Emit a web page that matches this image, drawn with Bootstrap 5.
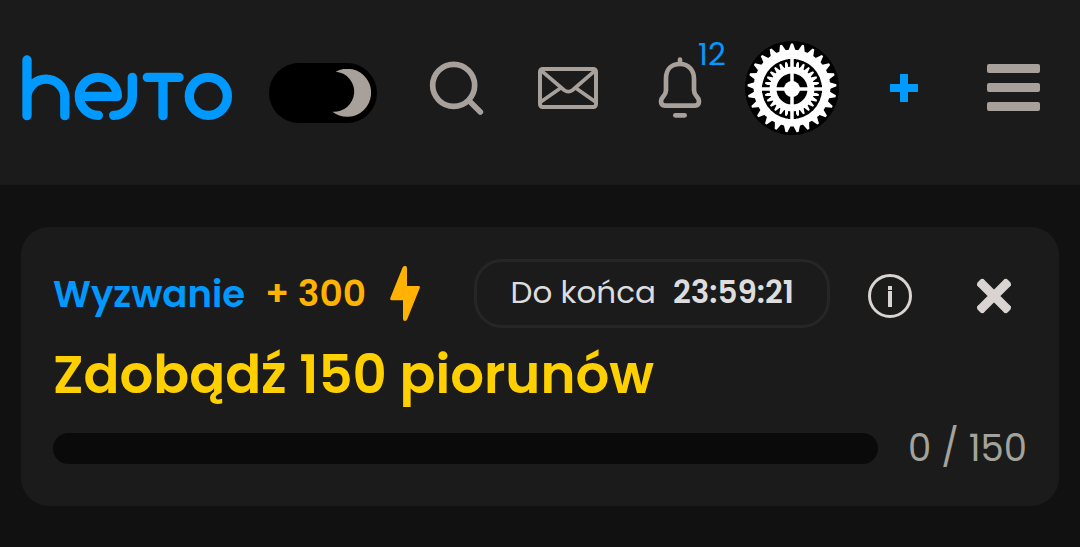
<!DOCTYPE html>
<html lang="pl" data-bs-theme="dark">
<head>
<meta charset="utf-8">
<meta name="viewport" content="width=device-width, initial-scale=1">
<title>Hejto</title>
<link href="https://cdn.jsdelivr.net/npm/bootstrap@5.3.0/dist/css/bootstrap.min.css" rel="stylesheet">
<style>
  :root { --panel: #1b1b1b; --blue: #0099ff; --stone: #a8a09b; --light: #d9d4d2; }
  body { background: #111; font-family: Poppins, Inter, "Open Sans", sans-serif; }
  svg { display: block; overflow: visible; }
  .topbar { background: var(--panel); padding: 40px 8px 50px 22px; gap: 23px; }
  .brand-group { gap: 37px; padding-top: 1px; }
  .brand-link { color: var(--blue); }
  .theme-switch {
    appearance: none; width: 108px; height: 60px; margin: 10px 0 0; border-radius: 30px;
    background: #000 url("data:image/svg+xml,%3Csvg xmlns='http://www.w3.org/2000/svg' viewBox='0 0 118 146'%3E%3Cpath fill='%23a8a09b' d='M11 8A73 73 0 1 1 1 130A61 61 0 0 0 11 8Z'/%3E%3C/svg%3E") no-repeat right 6px center / 39px 48px;
  }
  .tool { flex: 1 1 0; height: 95px; color: var(--stone); }
  .tool, .plain { background: none; border: 0; padding: 0; }
  .count { top: -4px; left: calc(50% + 18px); font-size: 31px; line-height: 36px; font-weight: 400; color: var(--blue); }
  .line { fill: none; stroke: currentColor; stroke-linecap: round; stroke-linejoin: round; }
  .challenge { background: var(--panel); border-radius: 28px; margin: 42px 21px; padding: 32px 32px 42px; }
  .kicker { font-size: 37px; line-height: 48px; font-weight: 600; color: var(--blue); margin-right: 20px; }
  .reward { font-size: 36px; line-height: 48px; font-weight: 600; color: #ffb300; }
  .timer { border: 3px solid #262626; border-radius: 28px; height: 69px; padding: 0 33px 3px; margin-right: 38px; font-size: 31px; color: #ddd; gap: 17px; }
  .timer span { font-weight: 400; }
  .timer strong { font-weight: 600; }
  .plain { color: var(--light); margin-top: 5px; }
  .close-btn { width: 67px; height: 64px; }
  .goal { font-size: 53px; line-height: 72px; font-weight: 600; color: #ffd000; margin: 11px 0 22px; }
  .goal-row { gap: 30px; }
  .goal-bar { height: 31px; border-radius: 16px; background: #0a0a0a; }
  .score { font-size: 37px; line-height: 31px; font-weight: 400; color: #a3a39c; }
</style>
</head>
<body>
<header class="topbar d-flex align-items-center">
  <div class="brand-group d-flex align-items-center">
    <a class="brand-link" href="#" aria-label="hejto">
      <svg width="210" height="66" viewBox="66 45 630 198"><path class="line" stroke-width="28" d="M81 60V227M81 168a57 56 0 0 1 113.500 0V227M295 226a57 57 0 1 1 57-57H250M397 112V169a56 57 0 0 1-56 57M442 112H537M489 112V227M682 169a57 57 0 1 1-114 0a57 57 0 1 1 114 0"/></svg>
    </a>
    <input class="theme-switch" type="checkbox" role="switch" aria-label="Tryb ciemny" checked>
  </div>
  <nav class="d-flex flex-grow-1">
    <button class="tool d-flex align-items-center justify-content-center" aria-label="Szukaj">
      <svg width="53" height="54" viewBox="525 63 159 162"><g class="line" stroke-width="17"><circle cx="596" cy="136" r="63"/><path d="M643 183L676 216"/></g></svg>
    </button>
    <button class="tool d-flex align-items-center justify-content-center" aria-label="Wiadomości">
      <svg width="60" height="42" viewBox="57 113 180 126"><g class="line" stroke-width="12"><rect x="63" y="119" width="168" height="114" rx="8"/><path stroke-width="11" d="M66 123L135 182Q148 192 161 182L229 123M66 217L125 176M229 217L170 176"/></g></svg>
    </button>
    <button class="tool d-flex align-items-center justify-content-center position-relative" aria-label="Powiadomienia">
      <svg width="42" height="61" viewBox="417 84 126 183"><g class="line" stroke-width="14"><path d="M480 92V105M438 149C438 120 455 105 480 105C506 105 522 124 522 149V184C522 203 537 201 537 217Q537 230 525 230H435Q423 230 423 217C423 201 438 203 438 184Z"/><path d="M466 259H494"/></g></svg>
      <span class="count position-absolute">12</span>
    </button>
    <button class="tool d-flex align-items-center justify-content-center" aria-label="Profil">
      <svg width="94" height="94" viewBox="-47 -47 94 94"><circle r="47"/><circle r="38.500" fill="#fff"/><path id="outerTeeth" fill="#fff"/><g transform="translate(0 1)"><circle r="30"/><path id="innerTeeth" fill="#fff"/><path d="M-30 0H30M0-30V30" stroke="#000" stroke-width="8"/><circle r="22.500" fill="#fff"/><circle r="15.500"/><path d="M-31 0H31M0-31V31" stroke="#fff" stroke-width="3.500"/><circle r="8" fill="#fff"/></g></svg>
    </button>
    <button class="tool d-flex align-items-center justify-content-center" aria-label="Dodaj">
      <svg width="28" height="28" viewBox="0 0 28 28"><path fill="#0099ff" d="M10 0h8v10h10v8H18v10h-8V18H0v-8h10z"/></svg>
    </button>
    <button class="tool d-flex align-items-center justify-content-center" aria-label="Menu">
      <svg width="58" height="47" viewBox="0 0 58 47" fill="currentColor"><rect width="53" height="9" rx="2"/><rect y="19" width="53" height="9" rx="2"/><rect y="38" width="53" height="9" rx="2"/></svg>
    </button>
  </nav>
</header>

<main>
  <section class="challenge">
    <div class="d-flex align-items-center">
      <span class="kicker">Wyzwanie</span>
      <span class="reward me-4">+ 300</span>
      <svg width="30" height="55" viewBox="30 33 90 165" fill="#ffb300"><path d="M68 37Q71 32 77 33Q81 34 81 40V93H117Q122 94 119 100L82 192Q80 198 74 198Q69 197 69 191V136H34Q29 135 31 129Z"/></svg>
      <div class="timer d-flex align-items-center ms-auto"><span>Do końca</span><strong>23:59:21</strong></div>
      <button class="plain" aria-label="Informacje">
        <svg width="44" height="44" viewBox="0 0 44 44"><circle class="line" cx="22" cy="22" r="20.500" stroke-width="3"/><path fill="currentColor" d="M20 12h4v4h-4zM20 17h4v16h-4z"/></svg>
      </button>
      <button class="plain close-btn d-flex align-items-center justify-content-center ms-5" aria-label="Zamknij">
        <svg width="34" height="34" viewBox="0 0 34 34"><path fill="none" stroke="currentColor" stroke-width="9" d="M3 3L31 31M31 3L3 31"/><path class="line" stroke-width="5" d="M2.500 5L5 2.500M29 2.500L31.500 5M31.500 29L29 31.500M5 31.500L2.500 29"/></svg>
      </button>
    </div>
    <h1 class="goal">Zdobądź 150 piorunów</h1>
    <div class="goal-row d-flex align-items-center">
      <div class="goal-bar flex-grow-1" role="progressbar" aria-label="Postęp" aria-valuenow="0" aria-valuemin="0" aria-valuemax="150"></div>
      <span class="score">0 / 150</span>
    </div>
  </section>
</main>
<script src="https://cdn.jsdelivr.net/npm/bootstrap@5.3.0/dist/js/bootstrap.bundle.min.js"></script>
<script>
  // Tapered gear teeth, spaced evenly round a ring
  function teeth(id, count, base, tip, baseHalf, tipHalf) {
    let d = '';
    for (let i = 0; i < count; i++) {
      const a = i * 2 * Math.PI / count;
      const p = (x, r) => (x * Math.cos(a) + r * Math.sin(a)).toFixed(2) + ' ' + (x * Math.sin(a) - r * Math.cos(a)).toFixed(2);
      d += 'M' + p(-baseHalf, base) + 'L' + p(-tipHalf, tip) + 'L' + p(tipHalf, tip) + 'L' + p(baseHalf, base) + 'Z';
    }
    document.getElementById(id).setAttribute('d', d);
  }
  teeth('outerTeeth', 25, 37, 44.5, 3.7, 1);
  teeth('innerTeeth', 28, 21, 27.5, 2.4, 0.9);
</script>
</body>
</html>
